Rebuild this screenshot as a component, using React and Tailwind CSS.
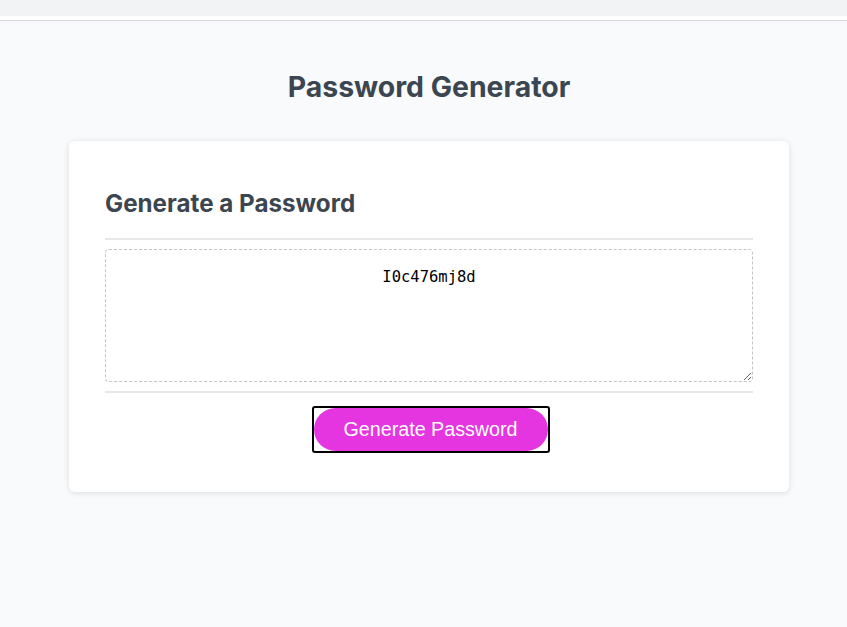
export default function App() {
  return (
    <div className="min-h-[627px] bg-[#f9fafc] font-['Inter',sans-serif]">
      {/* browser-ish top strip */}
      <div className="h-4 bg-[#f2f3f5]" />
      <div className="h-1 bg-white" />
      <div className="h-px bg-[#d8d8dc]" />

      <div className="pl-[11px]">
        <h1 className="mt-[49px] text-center text-[28.4px] font-bold leading-[34px] text-[#3b4650]">
          Password Generator
        </h1>

        <div className="mx-auto mt-[37px] w-[720px] rounded-md bg-white px-9 pb-[39px] pt-[46px] shadow-[0_1px_6px_rgba(0,0,0,0.12)]">
          <h2 className="text-[24.2px] font-bold leading-[34px] text-[#3b4650]">
            Generate a Password
          </h2>

          <div className="mt-[17px] h-[2px] bg-[#e8e8e8]" />

          <textarea
            readOnly
            value="I0c476mj8d"
            className="mt-[9px] block h-[133px] w-full resize-y rounded border border-dashed border-[#c4c4c8] px-3 pt-4 text-center font-['DejaVu_Sans_Mono',monospace] text-[15.5px] text-black outline-none"
          />

          <div className="mt-[9px] h-[2px] bg-[#e8e8e8]" />

          <div className="mt-[13px] flex justify-center pl-[3px]">
            <button className="h-[47px] w-[238px] rounded-[3px] border-2 border-black p-0">
              <span className="flex h-full w-full items-center justify-center rounded-full bg-[#e535e0] font-['Liberation_Sans',sans-serif] text-[19.7px] text-white">
                Generate Password
              </span>
            </button>
          </div>
        </div>
      </div>
    </div>
  );
}
